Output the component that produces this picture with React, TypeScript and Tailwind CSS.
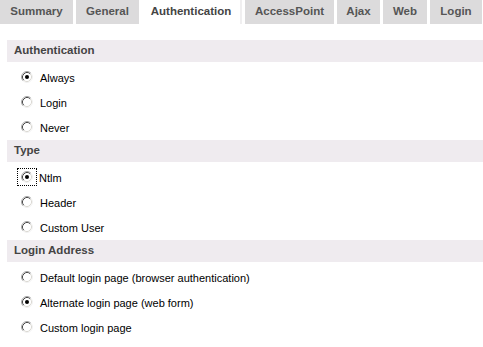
const TABS = [
  { label: "Summary", w: "w-[73px]" },
  { label: "General", w: "w-[63px]" },
  { label: "Authentication", w: "w-[100px]", active: true },
  { label: "AccessPoint", w: "w-[89px]" },
  { label: "Ajax", w: "w-[43px]" },
  { label: "Web", w: "w-[44px]" },
  { label: "Login", w: "w-[52px]" },
];

const SECTIONS = [
  { title: "Authentication", options: ["Always", "Login", "Never"], checked: 0 },
  { title: "Type", options: ["Ntlm", "Header", "Custom User"], checked: 0, focus: 0 },
  {
    title: "Login Address",
    options: [
      "Default login page (browser authentication)",
      "Alternate login page (web form)",
      "Custom login page",
    ],
    checked: 1,
  },
];

function Radio({ checked }: { checked: boolean }) {
  return (
    <svg width="12" height="12" viewBox="0 0 12 12" className="block">
      <circle cx="6" cy="6" r="4.5" fill="#ffffff" />
      <path d="M2.11 9.89A5.5 5.5 0 0 1 9.89 2.11" fill="none" stroke="#a8a8a8" />
      <path d="M9.89 2.11A5.5 5.5 0 0 1 2.11 9.89" fill="none" stroke="#f2f2f2" />
      <path d="M2.82 9.18A4.5 4.5 0 0 1 9.18 2.82" fill="none" stroke="#4a4a4a" />
      <path d="M9.18 2.82A4.5 4.5 0 0 1 2.82 9.18" fill="none" stroke="#dcdad4" />
      {checked && <circle cx="6" cy="6" r="2" fill="#000000" />}
    </svg>
  );
}

export default function App() {
  return (
    <div className="w-[483px] h-[347px] bg-white overflow-hidden font-['Liberation_Sans',Arial,sans-serif]">
      {/* Tabs */}
      <div className="flex gap-[3px] h-[24px]">
        {TABS.map((t) => (
          <div
            key={t.label}
            className={
              "flex items-center justify-center text-[11.5px] font-bold " +
              t.w +
              " " +
              (t.active ? "bg-white text-[#444] border-r-2 border-[#f0eff0]" : "bg-[#dcdbdc] text-[#555]")
            }
          >
            {t.label}
          </div>
        ))}
      </div>

      <div className="mt-[16px] flex flex-col">
        {SECTIONS.map((s) => (
          <div key={s.title} className="flex flex-col pb-[1px]">
            <div className="ml-[7px] h-[22px] bg-[#efebef] flex items-center pl-[7px] text-[11.5px] font-bold text-[#444]">
              {s.title}
            </div>
            <div className="pt-[2px] flex flex-col">
              {s.options.map((o, i) => (
                <div key={o} className="h-[25px] flex items-center pl-[17px] text-[11px] text-black">
                  <span
                    className={
                      "w-[20px] h-[18px] flex items-center justify-center border border-dotted mt-[1px] " +
                      (s.focus === i ? "border-black" : "border-transparent")
                    }
                  >
                    <Radio checked={s.checked === i} />
                  </span>
                  <span className={"mt-[4px] " + (s.focus === i ? "ml-[2px]" : "ml-[3px]")}>{o}</span>
                </div>
              ))}
            </div>
          </div>
        ))}
      </div>
    </div>
  );
}
